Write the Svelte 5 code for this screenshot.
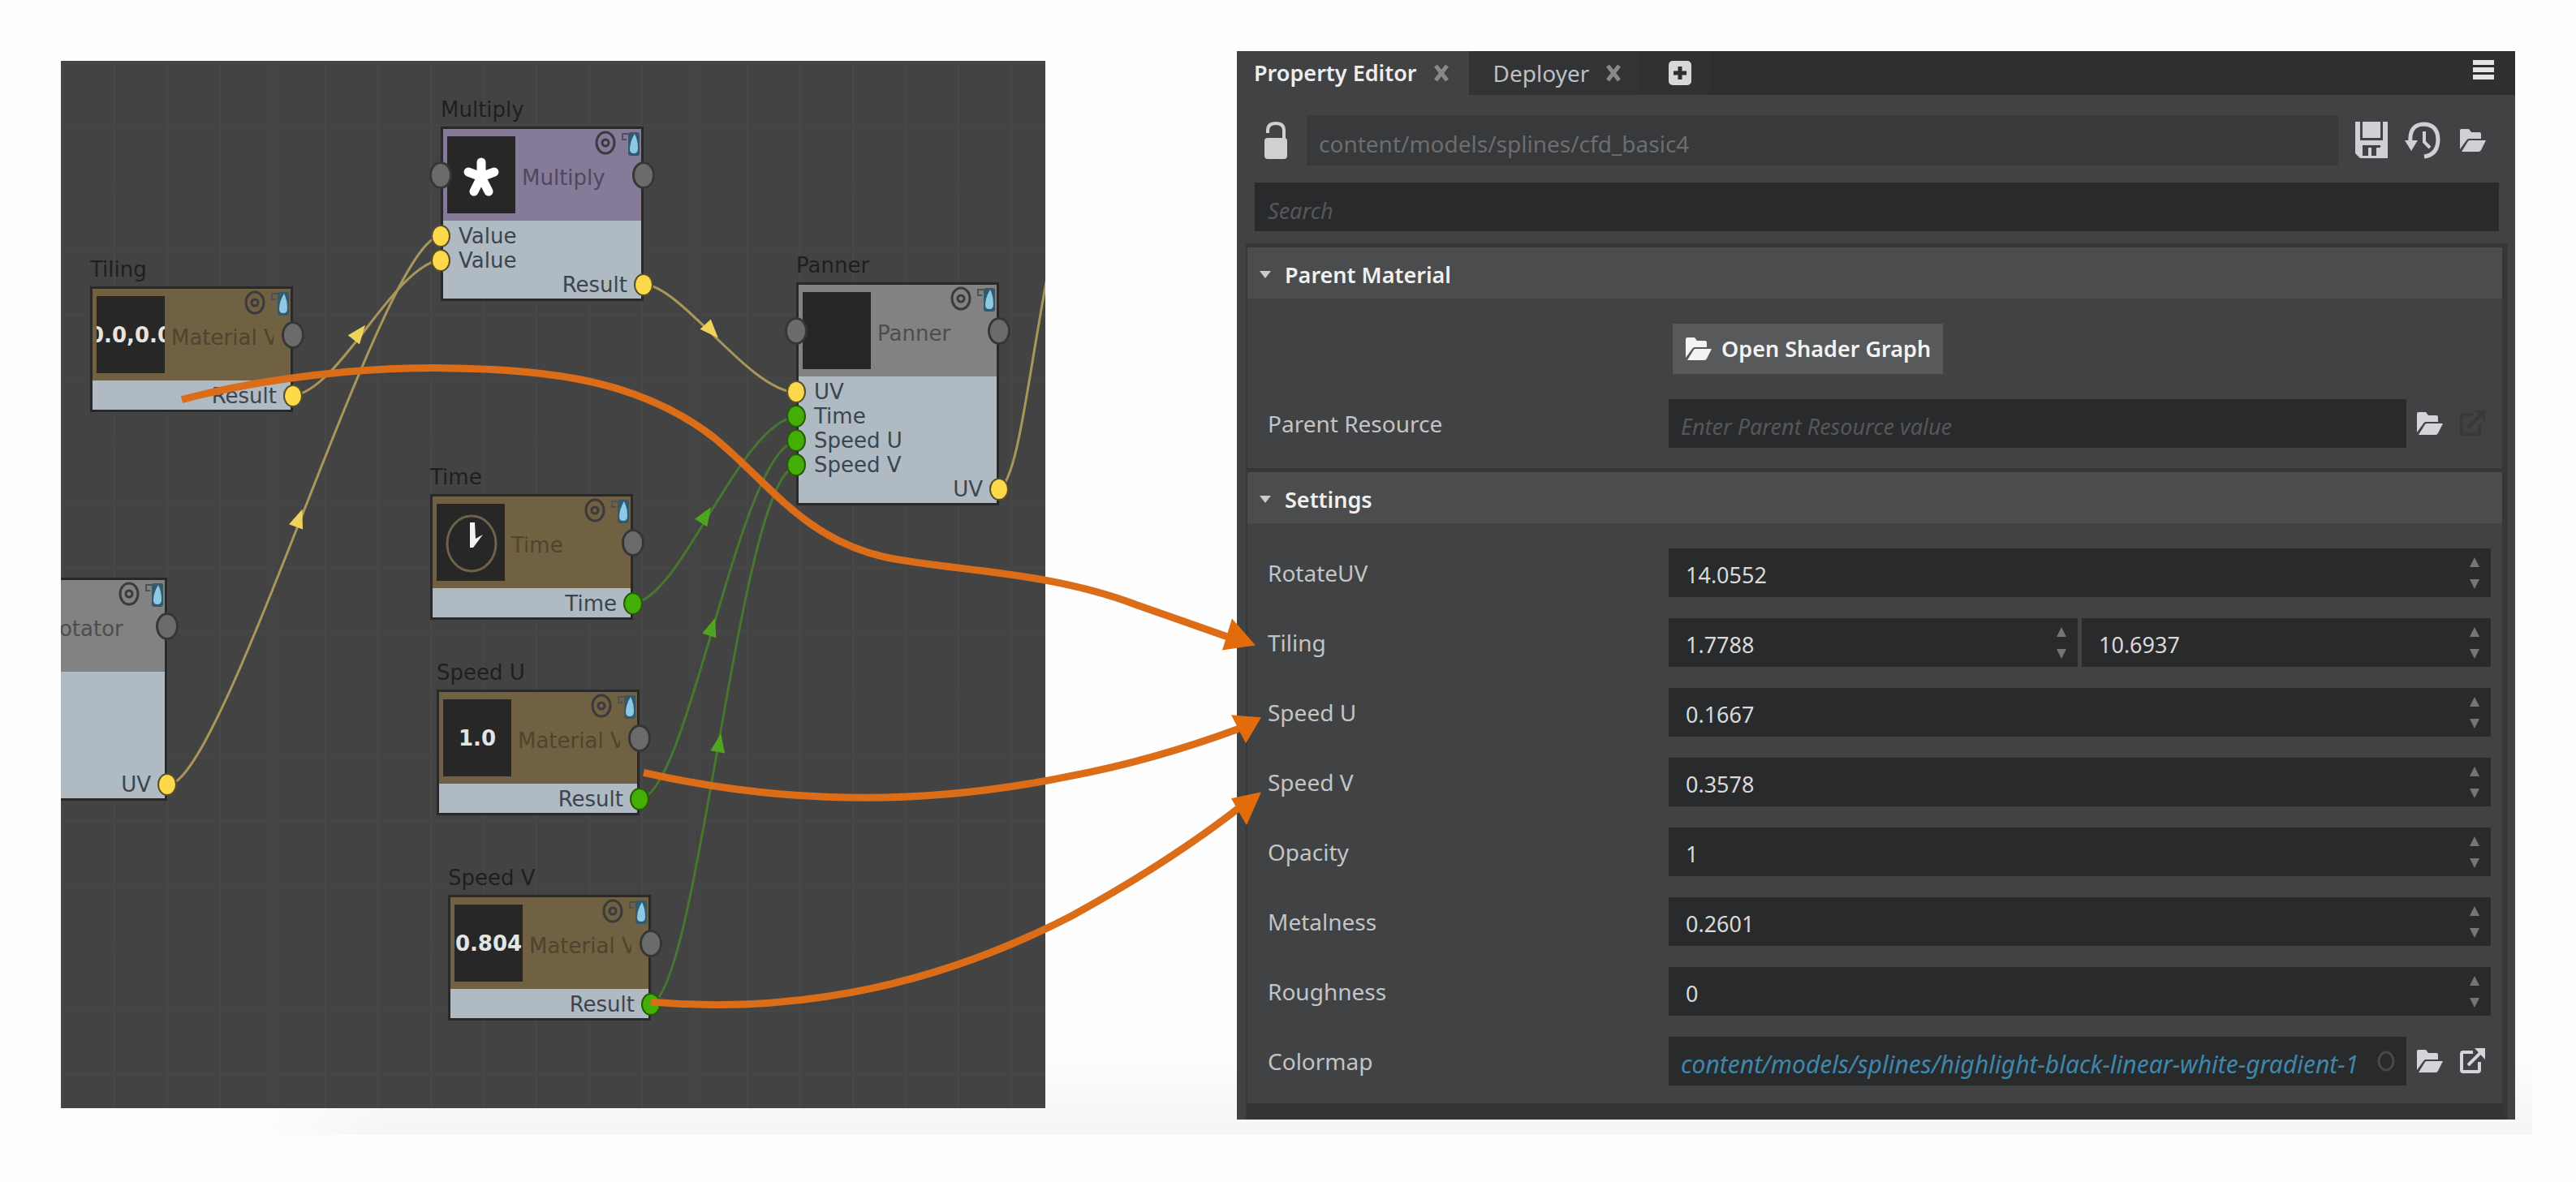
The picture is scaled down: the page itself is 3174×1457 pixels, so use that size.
<script>
  const nodes = [
    { title: 'Multiply', name: 'Multiply', kind: 'math', x: 468, y: 39, thumb: 'star', inPort: true,
      rows: [{ in: 'Value', color: 'yellow' }, { in: 'Value', color: 'yellow' }, { out: 'Result', color: 'yellow' }] },
    { title: 'Tiling', name: 'Material V', kind: 'input', x: 36, y: 236, thumb: '0.0,0.0',
      rows: [{ out: 'Result', color: 'yellow' }] },
    { title: 'Panner', name: 'Panner', kind: 'util', x: 906, y: 231, thumb: '', inPort: true,
      rows: [{ in: 'UV', color: 'yellow' }, { in: 'Time', color: 'green' }, { in: 'Speed U', color: 'green' },
             { in: 'Speed V', color: 'green' }, { out: 'UV', color: 'yellow' }] },
    { title: 'Time', name: 'Time', kind: 'input', x: 455, y: 492, thumb: 'clock',
      rows: [{ out: 'Time', color: 'green' }] },
    { title: '', name: 'Rotator', kind: 'util', x: -119, y: 595, thumb: '', inPort: true,
      rows: [{}, {}, {}, {}, { out: 'UV', color: 'yellow' }] },
    { title: 'Speed U', name: 'Material V', kind: 'input', x: 463, y: 733, thumb: '1.0',
      rows: [{ out: 'Result', color: 'green' }] },
    { title: 'Speed V', name: 'Material V', kind: 'input', x: 477, y: 986, thumb: '0.804',
      rows: [{ out: 'Result', color: 'green' }] }
  ];

  const wires = [
    { d: 'M286 413C346 403 408 255 468 245', color: 'yellow', x: 367, y: 336, angle: -52 },
    { d: 'M131 893C201 893 398 216 468 216', color: 'yellow', x: 293, y: 565, angle: -70 },
    { d: 'M718 275C768 280 846 405 906 409', color: 'yellow', x: 801, y: 332, angle: 47 },
    { d: 'M1156 530C1180 510 1190 400 1216 262', color: 'yellow' },
    { d: 'M706 669C766 659 836 448 906 438', color: 'green', x: 794, y: 561, angle: -58 },
    { d: 'M714 910C774 900 836 479 906 469', color: 'green', x: 802, y: 699, angle: -72 },
    { d: 'M727 1163C787 1143 836 510 906 500', color: 'green', x: 811, y: 842, angle: -80 }
  ];

  const settings = [
    { label: 'RotateUV', values: [14.0552] },
    { label: 'Tiling', values: [1.7788, 10.6937] },
    { label: 'Speed U', values: [0.1667] },
    { label: 'Speed V', values: [0.3578] },
    { label: 'Opacity', values: [1] },
    { label: 'Metalness', values: [0.2601] },
    { label: 'Roughness', values: [0] }
  ];
</script>

{#snippet folder()}
  <svg class="icon folder" viewBox="0 0 34 30" aria-hidden="true">
    <path d="M1 26V3q0-2 2-2h9l3 4h10q2 0 2 2v6H12q-2 0-3 2z" />
    <path d="M3 29l8-13q1-1 2-1h20l-6 12q-1 2-3 2z" />
  </svg>
{/snippet}

{#snippet external()}
  <svg class="icon external" viewBox="0 0 34 34" aria-hidden="true">
    <path d="M18 6H6q-2 0-2 2v20q0 2 2 2h18q2 0 2-2V18M12 22L28 6" fill="none" stroke="currentColor" stroke-width="4" />
    <path d="M20 1h13v14z" />
  </svg>
{/snippet}

<main class="stage">
  <section class="graph" aria-label="Shader graph">
    <svg class="wires" aria-hidden="true">
      {#each wires as w}
        <path class="wire {w.color}" d={w.d} />
        {#if w.angle !== undefined}
          <path class="head {w.color}" d="M-10 -9L13 0L-10 9z" transform="translate({w.x} {w.y}) rotate({w.angle})" />
        {/if}
      {/each}
    </svg>

    {#each nodes as n}
      <article class="node {n.kind}" style="left: {n.x}px; top: {n.y}px">
        <h3>{n.title}</h3>
        <div class="frame">
          <header>
            <div class="thumb">
              {#if n.thumb === 'star'}
                <svg viewBox="0 0 84 95" aria-hidden="true">
                  <path d="M42 32V50M42 50L26 44M42 50L58 44M42 50L33 68M42 50L51 68" stroke="#fff" stroke-width="11" stroke-linecap="round" />
                </svg>
              {:else if n.thumb === 'clock'}
                <svg viewBox="0 0 84 95" aria-hidden="true">
                  <ellipse cx="43" cy="49" rx="30" ry="34" fill="none" stroke="#6f624b" stroke-width="3" />
                  <path d="M41 23h6l1 20l9-5l-12 16h-4z" fill="#f4f4f4" />
                </svg>
              {:else}
                <span>{n.thumb}</span>
              {/if}
            </div>
            <span class="name">{n.name}</span>
            <svg class="badges" viewBox="0 0 56 34" aria-hidden="true">
              <ellipse cx="14" cy="17" rx="11" ry="13" fill="none" stroke="#3b3a3c" stroke-width="3" />
              <circle cx="14" cy="17" r="4" fill="none" stroke="#3b3a3c" stroke-width="3" />
              <path d="M34 6h8M35 6v7h5" fill="none" stroke="#4a5257" stroke-width="2" />
              <rect x="42" y="4" width="14" height="29" rx="3" fill="#35596b" />
              <path d="M50 6q4 8 4 18q0 6-5 6t-5-5q0-9 6-19z" fill="#8cc9e4" />
            </svg>
            {#if n.inPort}<i class="port plain left"></i>{/if}
            <i class="port plain right"></i>
          </header>
          <ul>
            {#each n.rows as r}
              <li class:output={r.out}>
                {r.in ?? r.out ?? ''}
                {#if r.color}<i class="port {r.color} {r.out ? 'right' : 'left'}"></i>{/if}
              </li>
            {/each}
          </ul>
        </div>
      </article>
    {/each}
  </section>

  <section class="panel" aria-label="Property Editor">
    <nav class="tabs">
      <div class="tab active">
        <button class="tab-name">Property Editor</button>
        <button class="close" aria-label="Close Property Editor"><svg viewBox="0 0 20 22"><path d="M3 2L17 20M17 2L3 20" /></svg></button>
      </div>
      <div class="tab">
        <button class="tab-name">Deployer</button>
        <button class="close" aria-label="Close Deployer"><svg viewBox="0 0 20 22"><path d="M3 2L17 20M17 2L3 20" /></svg></button>
      </div>
      <button class="add" aria-label="Add tab">
        <svg viewBox="0 0 30 32"><rect x="1" y="1" width="28" height="30" rx="5" fill="#d6d7d9" /><path d="M15 8v16M7 16h16" stroke="#2e2f31" stroke-width="5" /></svg>
      </button>
      <button class="menu" aria-label="Menu">
        <svg viewBox="0 0 28 26"><path d="M1 4h26M1 13h26M1 22h26" stroke="#e4e4e4" stroke-width="6" /></svg>
      </button>
    </nav>

    <div class="toolbar">
      <button class="lock" aria-label="Unlock">
        <svg viewBox="0 0 30 48"><path d="M5 15V12q0-9 10-9t10 9v12" fill="none" stroke="#cfd0d2" stroke-width="4" /><rect x="1" y="21" width="28" height="26" rx="4" fill="#cfd0d2" /></svg>
      </button>
      <input class="path" aria-label="Resource path" value="content/models/splines/cfd_basic4" readonly />
      <button aria-label="Save">
        <svg class="big" viewBox="0 0 44 48">
          <path fill-rule="evenodd" d="M2 1H42V46H8L2 40zM8 1V24H36V1zM11 30V43H33V30z" />
          <rect x="11" y="1" width="22" height="20" />
          <path d="M18 33h4v10h-4zM28 33h5v10h-5z" />
        </svg>
      </button>
      <button aria-label="History">
        <svg class="big" viewBox="0 0 44 48">
          <path d="M7 27Q5 4 24 4Q41 5 41 24Q40 42 24 44" fill="none" stroke="currentColor" stroke-width="5" />
          <path d="M0 24h16l-8 13z" />
          <path d="M24 13v13l7 7" fill="none" stroke="currentColor" stroke-width="4" />
        </svg>
      </button>
      <button class="browse" aria-label="Browse">{@render folder()}</button>
    </div>

    <input class="search" type="search" aria-label="Search" placeholder="Search" />

    <div class="groups">
      <section>
        <h2><button><span class="caret"></span>Parent Material</button></h2>
        <div class="body parent">
          <div class="row"><span></span><button class="open">{@render folder()}Open Shader Graph</button></div>
          <div class="row">
            <label for="parent-resource">Parent Resource</label>
            <div class="resource">
              <input id="parent-resource" placeholder="Enter Parent Resource value" />
              <button aria-label="Browse parent resource">{@render folder()}</button>
              <button class="dim" aria-label="Open parent resource" disabled>{@render external()}</button>
            </div>
          </div>
        </div>
      </section>
      <section>
        <h2><button><span class="caret"></span>Settings</button></h2>
        <div class="body">
          {#each settings as s, i}
            <div class="row">
              <label for="setting-{i}-0">{s.label}</label>
              <div class="numbers">
                {#each s.values as v, j}
                  <div class="number">
                    <input id="setting-{i}-{j}" type="number" step="any" value={v} aria-label={s.label} />
                    <div class="spin">
                      <button aria-label="Increase {s.label}"><svg viewBox="0 0 14 12"><path d="M7 0L13 12H1z" /></svg></button>
                      <button aria-label="Decrease {s.label}"><svg viewBox="0 0 14 12"><path d="M7 12L13 0H1z" /></svg></button>
                    </div>
                  </div>
                {/each}
              </div>
            </div>
          {/each}
          <div class="row">
            <label for="colormap">Colormap</label>
            <div class="resource">
              <div class="link">
                <input id="colormap" value="content/models/splines/highlight-black-linear-white-gradient-1" />
                <button aria-label="Clear colormap"><svg viewBox="0 0 22 26"><ellipse cx="11" cy="13" rx="9" ry="11" /></svg></button>
              </div>
              <button aria-label="Browse colormap">{@render folder()}</button>
              <button aria-label="Open colormap">{@render external()}</button>
            </div>
          </div>
        </div>
      </section>
    </div>
  </section>

  <svg class="callouts" viewBox="0 0 3120 1400" preserveAspectRatio="none" aria-hidden="true">
    <path d="M224 493C330 465 450 453 546 454C680 455 790 470 880 540C950 598 990 664 1090 687C1170 704 1290 704 1400 746L1514 786" />
    <path d="M793 953Q930 984 1065 984Q1190 984 1320 957Q1420 938 1526 899" />
    <path d="M802 1236Q940 1248 1075 1219Q1200 1192 1320 1130Q1440 1064 1526 997" />
    <path class="tip" d="M1547 796L1518 763L1506 802zM1554 885L1517 882L1535 917zM1554 977L1517 985L1536 1018z" />
  </svg>
</main>

<style>
  :global(body) { margin: 0; background: #fefefe; }
  * { box-sizing: border-box; }
  button { border: 0; padding: 0; background: none; color: inherit; font: inherit; display: flex; align-items: center; cursor: pointer; }
  input { border: 0; outline: 0; min-width: 0; font: inherit; }
  h2, h3, ul { margin: 0; padding: 0; font: inherit; list-style: none; }

  .stage {
    position: relative;
    display: grid;
    grid-template-columns: 1213fr 1575fr;
    column-gap: 236px;
    align-items: start;
    margin-right: 54px;
    padding: 63px 21px 19px 75px;
    background:
      linear-gradient(to right, #fefefe 300px, transparent 480px),
      linear-gradient(to bottom, #fefefe 92%, #f5f5f8);
  }

  /* Graph canvas */
  .graph {
    position: relative;
    min-height: 1291px;
    margin-top: 12px;
    overflow: hidden;
    font: 26px/30px "DejaVu Sans", sans-serif;
    background:
      repeating-linear-gradient(to right, #474747 0 2px, transparent 2px 65px),
      repeating-linear-gradient(to bottom, #464646 0 2px, transparent 2px 78px),
      #434343;
  }
  .wires { position: absolute; inset: 0; width: 100%; height: 100%; }
  .wire { fill: none; stroke-width: 3; }
  .wire.yellow { stroke: #a9975a; }
  .wire.green { stroke: #47762f; }
  .head.yellow { fill: #eed25c; }
  .head.green { fill: #4fa520; }

  .node { position: absolute; width: 250px; }
  h3 { height: 42px; line-height: 42px; color: #1f1f20; white-space: nowrap; }
  .frame { position: relative; border: 3px solid #29292b; background: #afbac3; color: #3d444d; }
  header { position: relative; display: flex; align-items: center; height: 113px; padding: 2px 5px; }
  .math header { background: #857a98; color: #50475f; }
  .input header { background: #6f6142; color: #50432f; }
  .util header { background: #828282; color: #4d4d4d; }
  .thumb { display: flex; flex: none; align-items: center; justify-content: center; width: 84px; height: 95px; overflow: hidden; background: #272728; color: #e6e4e0; font-weight: bold; white-space: nowrap; }
  .thumb svg { width: 84px; height: 95px; }
  .name { flex: 1; min-width: 0; margin: 6px 0 0 8px; overflow: hidden; white-space: nowrap; }
  .input .name { margin-right: 16px; }
  .badges { position: absolute; top: 0; right: 2px; width: 56px; height: 34px; }
  ul { padding: 4px 0 2px; }
  li { position: relative; height: 30px; padding: 0 17px 0 19px; white-space: nowrap; }
  .output { text-align: right; }
  .port { position: absolute; top: 50%; width: 24px; height: 28px; margin-top: -14px; border: 2px solid #574f2c; border-radius: 50%; z-index: 1; }
  .left { left: -15px; }
  .right { right: -15px; }
  .port.yellow { background: #fcd94b; }
  .port.green { background: #43ae05; border-color: #245a0a; }
  .port.plain { width: 28px; height: 34px; margin-top: -17px; border: 3px solid #363637; background: #6b6b6b; }
  .plain.left { left: -17px; }
  .plain.right { right: -17px; }

  /* Property editor */
  .panel { background: #414244; color: #c3c4c6; font: 28px/38px "Noto Sans", sans-serif; }
  .tabs { display: flex; height: 54px; background: #2e2f31; }
  .tab { display: flex; align-items: center; gap: 20px; padding: 0 21px 0 30px; background: #323335; color: #bfc0c2; }
  .tab.active { padding-left: 21px; padding-right: 24px; background: #414244; color: #ededee; font-size: 27px; font-weight: 600; }
  .close svg { width: 20px; height: 22px; fill: none; stroke: #88898b; stroke-width: 5; }
  .add { padding: 0 22px 0 36px; background: #303133; }
  .add svg { width: 30px; height: 32px; }
  .menu { margin-left: auto; padding: 0 25px 8px 0; }
  .menu svg { width: 28px; height: 26px; }

  .toolbar { display: flex; align-items: center; gap: 19px; padding: 25px 35px 21px 33px; color: #cfd0d3; }
  .toolbar button { fill: currentColor; }
  .lock svg { width: 30px; height: 48px; }
  .lock { margin-right: 4px; }
  .path { flex: 1; height: 62px; padding: 8px 15px 0; background: #38393b; color: #6c6d70; }
  .big { width: 44px; height: 48px; }
  .browse { margin-left: 4px; }

  .icon { flex: none; fill: currentColor; }
  .folder { width: 34px; height: 30px; }
  .external { width: 34px; height: 34px; }

  .search { display: block; width: calc(100% - 42px); height: 60px; margin: 0 20px 15px 22px; padding: 8px 16px 0; background: #292a2c; color: #c3c4c6; font-size: 27px; appearance: none; }
  ::placeholder { color: #56575a; font-style: italic; opacity: 1; }

  .groups { margin: 0 9px 0 11px; padding-bottom: 20px; border: 0 solid #363739; border-width: 0 7px 0 2px; background: #333436; }
  .groups > section { border-top: 5px solid #363739; background: #414244; }
  h2 { background: #4b4c4e; color: #f0f0f1; font-size: 27px; font-weight: 600; }
  h2 button { width: 100%; height: 63px; padding: 4px 0 0 15px; gap: 17px; }
  .caret { border: 7px solid transparent; border-top: 9px solid #c9cacc; border-bottom: 0; }
  .body { display: grid; row-gap: 26px; padding: 31px 14px 22px 25px; }
  .body.parent { row-gap: 31px; padding-bottom: 25px; }
  .row { display: grid; grid-template-columns: 494px 1fr; align-items: center; min-height: 60px; }
  .open { justify-self: start; height: 62px; margin-left: 5px; padding: 0 15px; gap: 11px; background: #58595b; color: #f3f3f3; font-size: 27px; font-weight: 600; }
  .resource { display: grid; grid-template-columns: 1fr auto auto; align-items: center; column-gap: 12px; color: #d4d5d8; padding-right: 6px; }
  .resource > button:last-child { margin-left: 6px; }
  .resource input { width: 100%; height: 60px; padding: 6px 15px 0; background: #292a2c; font-size: 27px; }
  .resource > .dim { color: #38393b; }
  .numbers { display: flex; gap: 5px; }
  .number { display: flex; flex: 1; height: 60px; background: #292a2c; }
  .number input { flex: 1; padding: 6px 0 0 21px; background: none; color: #d9d9da; font-size: 27px; appearance: textfield; }
  .number input::-webkit-inner-spin-button { appearance: none; margin: 0; }
  .spin { display: grid; align-content: center; gap: 15px; padding-right: 13px; }
  .spin svg { display: block; width: 14px; height: 12px; fill: #747577; }
  .link { display: flex; align-items: center; background: #292a2c; }
  .resource .link input { flex: 1; padding-right: 0; color: #3f87ab; font-size: 30px; font-style: italic; }
  .link button { padding: 0 14px 0 8px; }
  .link svg { width: 22px; height: 26px; fill: none; stroke: #47484a; stroke-width: 3; }

  /* Arrows that tie graph nodes to their settings */
  .callouts { position: absolute; inset: 0; width: 100%; height: 100%; fill: none; stroke: #dc6d18; stroke-width: 9; pointer-events: none; z-index: 2; }
  .tip { fill: #e26c0c; stroke: none; }
</style>
